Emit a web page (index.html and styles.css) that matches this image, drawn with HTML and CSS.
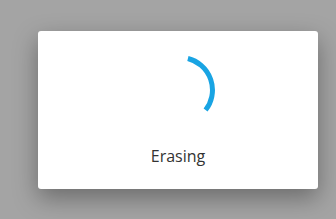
FILE: index.html
```html
<!DOCTYPE html>
<html lang="en">
<head>
    <meta charset="UTF-8">
    <meta name="viewport" content="width=device-width, initial-scale=1.0">
    <title>Erasing</title>
    <link rel="stylesheet" href="styles.css">
</head>
<body>
    <div class="overlay">
        <div class="dialog">
            <svg class="spinner" width="72" height="72" viewBox="0 0 72 72">
                <path d="M43.9 4.5 A32.5 32.5 0 0 1 61.6 56.0" fill="none" stroke="#19a4e3" stroke-width="5"/>
            </svg>
            <p class="status">Erasing</p>
        </div>
    </div>
</body>
</html>
```

FILE: styles.css
```css
body {
    margin: 0;
    padding: 0;
    background: #a4a4a4;
    font-family: 'Open Sans', 'Noto Sans', sans-serif;
    color: #333;
}

.overlay {
    height: 219px;
    padding: 31px 0 0 38px;
    box-sizing: border-box;
}

.dialog {
    width: 280px;
    height: 158px;
    background: #fff;
    border-radius: 3px;
    box-shadow: 0 9px 24px rgba(0, 0, 0, 0.35);
    display: flex;
    flex-direction: column;
    align-items: center;
    padding-top: 23px;
    box-sizing: border-box;
}

.spinner {
    display: block;
    margin-left: 3px;
}

.status {
    margin: 20px 0 0;
    font-size: 16px;
    line-height: 21px;
}
```
